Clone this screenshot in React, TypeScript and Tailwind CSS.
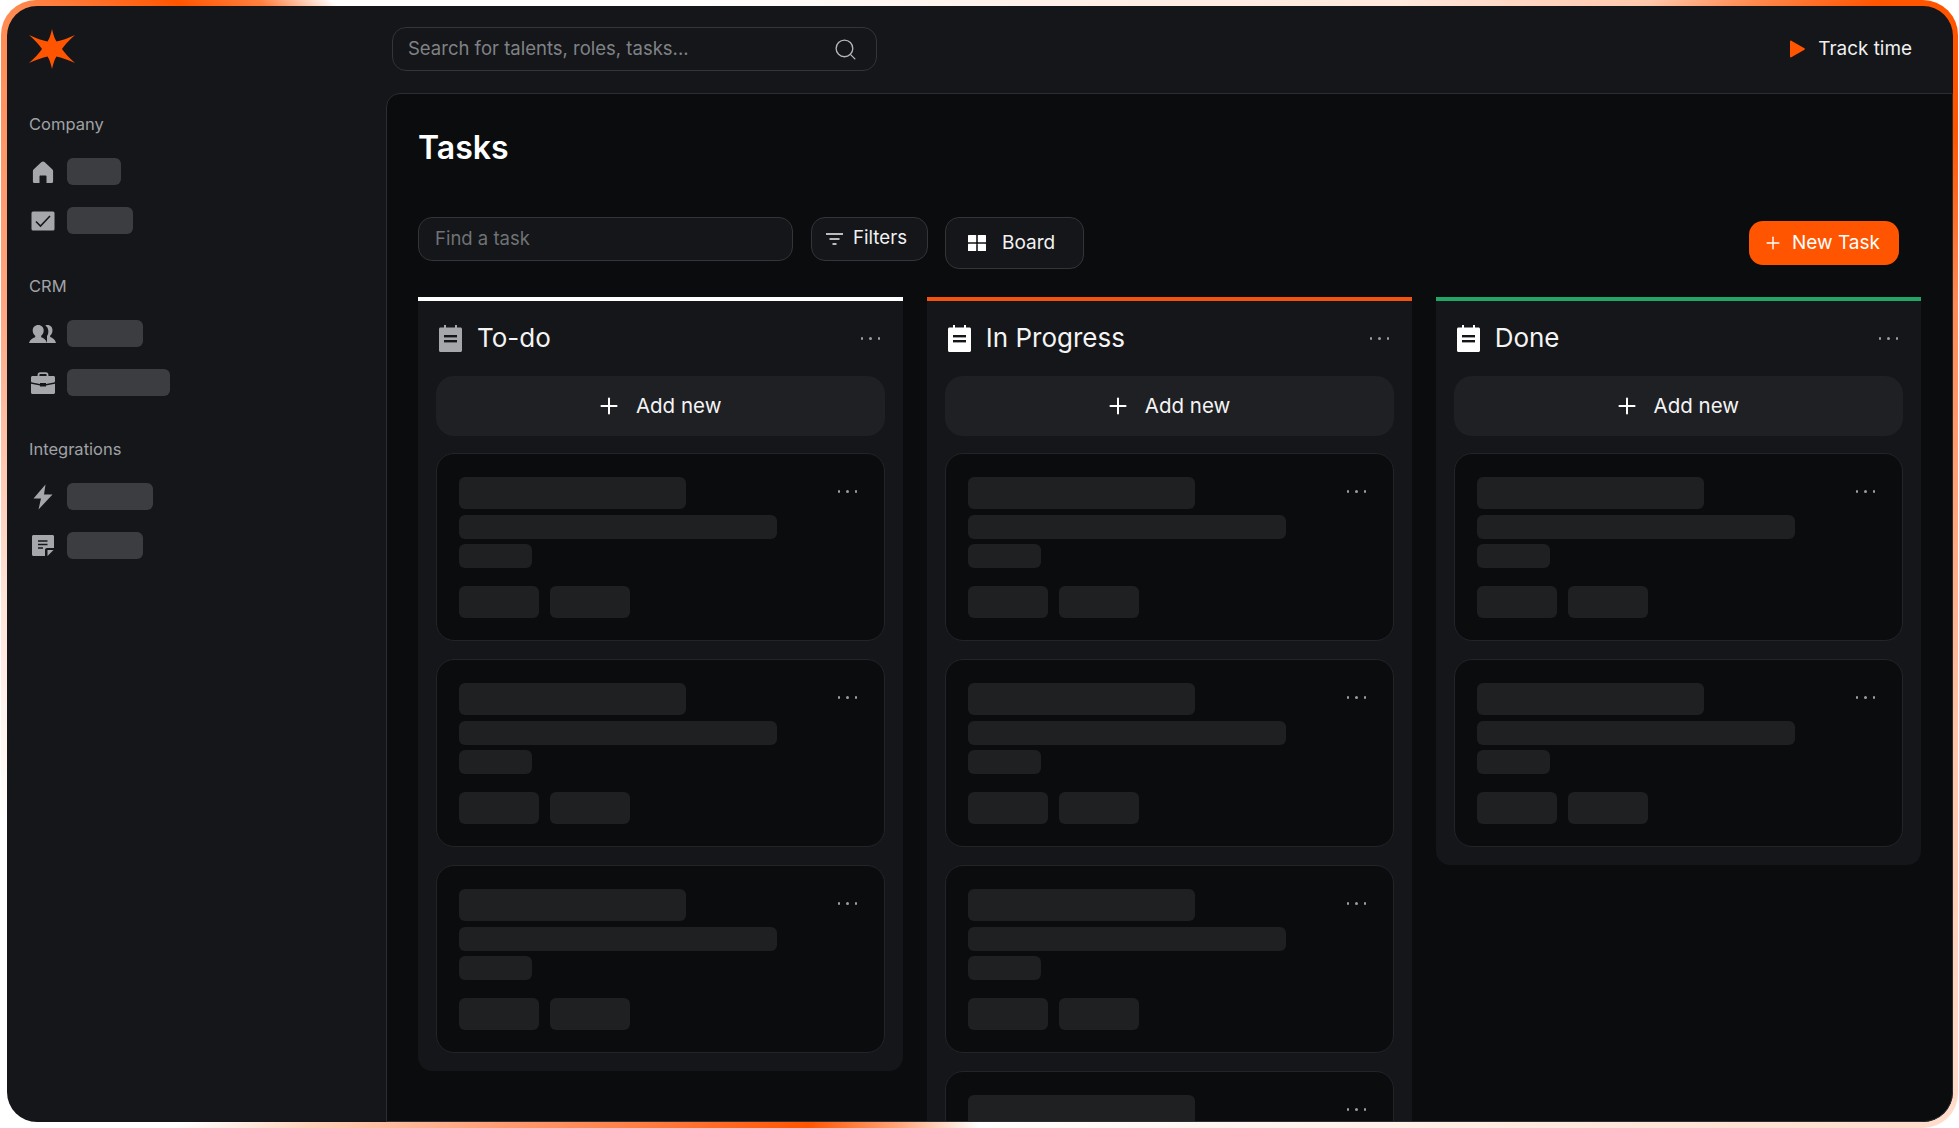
import { Plus, Search } from "lucide-react";

const NAV = [
  {
    label: "Company",
    top: "mt-[43px]",
    items: [
      { icon: HomeIcon, width: "w-[54px]" },
      { icon: CheckIcon, width: "w-[66px]" },
    ],
  },
  {
    label: "CRM",
    top: "mt-[40px]",
    items: [
      { icon: UsersIcon, width: "w-[76px]" },
      { icon: CaseIcon, width: "w-[103px]" },
    ],
  },
  {
    label: "Integrations",
    top: "mt-[41px]",
    items: [
      { icon: BoltIcon, width: "w-[86px]" },
      { icon: NoteIcon, width: "w-[76px]" },
    ],
  },
];

const COLUMNS = [
  { title: "To-do", bar: "bg-white", icon: "text-[#a6a7aa]", cards: 3 },
  { title: "In Progress", bar: "bg-[#f2540f]", icon: "text-white", cards: 4 },
  { title: "Done", bar: "bg-[#22a565]", icon: "text-white", cards: 2 },
];

function HomeIcon() {
  return (
    <svg width="24" height="26" viewBox="0 0 24 26" className="text-[#a6a7aa]">
      <path fill="currentColor" d="M12 2.500c.6 0 1.100.2 1.500.6l8 7.400c.4.400.6.900.6 1.400v10.600c0 .8-.6 1.500-1.400 1.500H15.500v-6.500c0-.6-.4-1-1-1h-5c-.6 0-1 .4-1 1V24H3.300c-.8 0-1.400-.7-1.400-1.500V11.900c0-.5.200-1 .6-1.400l8-7.400c.4-.4.900-.6 1.500-.6z" />
    </svg>
  );
}

function CheckIcon() {
  return (
    <svg width="24" height="20" viewBox="0 0 24 20">
      <rect x="0.500" y="0.500" width="23" height="19" rx="1.500" fill="#a6a7aa" />
      <path d="M5 10.500l4.500 4.500 9.500-10" fill="none" stroke="#17181b" strokeWidth="1.600" />
    </svg>
  );
}

function UsersIcon() {
  return (
    <svg width="27" height="18" viewBox="0 0 27 18" className="text-[#a6a7aa]">
      <path fill="currentColor" d="M18.500 0c3 0 5 2.300 5 5.200 0 2.300-1 4.300-2.300 5.400v1.500c2.400.8 4.900 2.400 5.800 5.900H18v-7c1-1.300 1.500-3.200 1.300-5.300-.2-2.400-1.300-4.300-3-5.300.7-.3 1.400-.4 2.200-.4z" />
      <path fill="currentColor" d="M9.200 0c3.200 0 5.500 2.400 5.500 5.400 0 2.300-1 4.200-2.500 5.300v1.500c2.600.8 4.900 2.500 5.800 5.800H0c.9-3.300 3.500-5 6.200-5.800v-1.500C4.700 9.600 3.700 7.700 3.700 5.400 3.700 2.400 6 0 9.200 0z" />
    </svg>
  );
}

function CaseIcon() {
  return (
    <svg width="24" height="22" viewBox="0 0 24 22" className="text-[#a6a7aa]">
      <path fill="none" stroke="currentColor" strokeWidth="1.800" d="M7.500 5V2.800c0-.9.700-1.600 1.600-1.600h5.800c.9 0 1.600.7 1.600 1.600V5" />
      <path fill="currentColor" d="M1.500 4h21c.8 0 1.500.7 1.500 1.500V9c0 .8-.5 1.400-1.200 1.600L15 12v-1H9v1L1.200 10.600C.5 10.400 0 9.800 0 9V5.500C0 4.700.7 4 1.500 4z" />
      <path fill="currentColor" d="M0 11.800l9 1.700v1h6v-1l9-1.700v8.700c0 .8-.7 1.500-1.500 1.500h-21C.7 22 0 21.300 0 20.500z" />
    </svg>
  );
}

function BoltIcon() {
  return (
    <svg width="20" height="26" viewBox="0 0 20 26" className="text-[#a6a7aa]">
      <path fill="currentColor" d="M12.500 0.500L0.500 14.500h7.500L5.500 25.500 19.500 10.500h-8.500z" />
    </svg>
  );
}

function NoteIcon() {
  return (
    <svg width="22" height="21" viewBox="0 0 22 21">
      <path fill="#a6a7aa" d="M1.500 0h19c.8 0 1.500.6 1.500 1.400V13h-7c-1.100 0-2 .9-2 2v6H1.500C.7 21 0 20.300 0 19.500V1.500C0 .7.700 0 1.500 0z" />
      <path fill="#a6a7aa" d="M15.500 15H21.500L15.500 21z" />
      <path fill="none" stroke="#17181b" strokeWidth="1.700" d="M6 6h9.500M6 9.500h9.500M6 13h5" />
    </svg>
  );
}

function Logo() {
  return (
    <svg width="46" height="40" viewBox="0 0 46 40" className="text-[#ff5500]">
      <path fill="currentColor" d="M23 0Q25 9 27.500 12.500Q35 11 46 6Q37 14 33 20Q37 26 46 34Q35 29 27.500 27.500Q25 31 23 40Q21 31 18.500 27.500Q11 29 0 34Q9 26 13 20Q9 14 0 6Q11 11 18.500 12.500Q21 9 23 0z" />
    </svg>
  );
}

function FilterIcon() {
  return (
    <svg width="17" height="12" viewBox="0 0 17 12">
      <path d="M0 1h17M3.500 6h10M6.500 11h4" stroke="#f2f2f2" strokeWidth="1.500" fill="none" />
    </svg>
  );
}

function BoardIcon() {
  return (
    <svg width="18" height="16" viewBox="0 0 18 16" fill="#ffffff">
      <rect width="8.200" height="7.300" rx="0.500" />
      <rect x="9.800" width="8.200" height="7.300" rx="0.500" />
      <rect y="8.700" width="8.200" height="7.300" rx="0.500" />
      <rect x="9.800" y="8.700" width="8.200" height="7.300" rx="0.500" />
    </svg>
  );
}

function ListIcon({ className }: { className: string }) {
  return (
    <svg width="23" height="27" viewBox="0 0 23 27" className={className}>
      <path fill="currentColor" d="M5 0h2v2.500h9V0h2v2.500h3.500c.8 0 1.500.7 1.500 1.500v21.500c0 .8-.7 1.500-1.500 1.500h-20C.7 27 0 26.300 0 25.500V4c0-.8.700-1.500 1.500-1.500H5z" />
      <rect x="5" y="10" width="13" height="2.400" fill="#141619" />
      <rect x="5" y="15" width="13" height="2.400" fill="#141619" />
    </svg>
  );
}

function Dots({ className }: { className?: string }) {
  return (
    <div className={`flex gap-[6px] ${className ?? ""}`}>
      <span className="h-[2.500px] w-[2.500px] rounded-full bg-[#9c9da0]" />
      <span className="h-[2.500px] w-[2.500px] rounded-full bg-[#9c9da0]" />
      <span className="h-[2.500px] w-[2.500px] rounded-full bg-[#9c9da0]" />
    </div>
  );
}

function Sidebar() {
  return (
    <aside className="flex w-[379px] shrink-0 flex-col pl-[22px] pt-[23px]">
      <Logo />
      {NAV.map((group) => (
        <div key={group.label} className={group.top}>
          <div className="h-[26px] text-[16.500px] leading-[24px] text-[#a0a2a6]">{group.label}</div>
          <div className="mt-[20px] flex flex-col gap-[22px]">
            {group.items.map((item, j) => {
              const Icon = item.icon;
              return (
                <div key={j} className="flex h-[27px] items-center">
                  <div className="flex w-[38px] justify-center pr-[11px]">
                    <Icon />
                  </div>
                  <div className={`-ml-[0.500px] h-[27px] rounded-[6px] bg-[#3c3d41] ${item.width}`} />
                </div>
              );
            })}
          </div>
        </div>
      ))}
    </aside>
  );
}

function TaskCard() {
  return (
    <div className="relative h-[188px] shrink-0 rounded-[18px] border border-[#222427] bg-[#0b0c0e] px-[22px] pt-[23px]">
      <div className="h-[32px] w-[227px] rounded-[6px] bg-[#1f2022]" />
      <div className="mt-[6px] h-[24px] w-[318px] rounded-[6px] bg-[#1f2022]" />
      <div className="mt-[5px] h-[24px] w-[73px] rounded-[6px] bg-[#1f2022]" />
      <div className="mt-[18px] flex gap-[11px]">
        <div className="h-[32px] w-[80px] rounded-[6px] bg-[#1f2022]" />
        <div className="h-[32px] w-[80px] rounded-[6px] bg-[#1f2022]" />
      </div>
      <Dots className="absolute right-[27px] top-[36px]" />
    </div>
  );
}

function Column({ title, bar, icon, cards }: (typeof COLUMNS)[number]) {
  return (
    <div className="flex flex-col rounded-b-[14px] bg-[#141619] pb-[18px]">
      <div className={`h-[4px] shrink-0 ${bar}`} />
      <div className="flex h-[75px] shrink-0 items-center px-[21px]">
        <ListIcon className={icon} />
        <span className="ml-[15px] pb-[2px] text-[26px] leading-[32px] text-[#f4f4f4]">{title}</span>
        <Dots className="ml-auto mr-[2px]" />
      </div>
      <div className="flex flex-col gap-[18px] px-[18px]">
        <button className="-mb-px flex h-[60px] shrink-0 items-center justify-center gap-[14px] rounded-[18px] bg-[#1e2024] pr-[4px] text-[20.500px] text-[#f4f4f4]">
          <Plus size={26} strokeWidth={1.850} className="text-white" />
          <span>Add new</span>
        </button>
        {Array.from({ length: cards }).map((_, i) => (
          <TaskCard key={i} />
        ))}
      </div>
    </div>
  );
}

export default function App() {
  return (
    <div className="h-[1128px] overflow-hidden bg-white px-[1px]">
      <div className="h-full rounded-[35px] bg-[conic-gradient(from_0deg_at_50%_50%,#fff3ec_0deg,#ffe8dd_37deg,#ffc8ac_50deg,#ff8a50_54deg,#ff5500_58deg,#ff5500_66deg,#ff8a55_75deg,#ffc4a8_100deg,#ffdccc_120deg,#fff0e8_143deg,#ffffff_180deg,#ffa880_188deg,#ff5500_197deg,#ff6a25_205deg,#ff9a70_220deg,#ffd0ba_230deg,#ffffff_235deg,#ffffff_255deg,#ffe4d8_268deg,#ffa680_285deg,#ff8a50_300deg,#ff5500_305deg,#ff8040_308deg,#ffffff_311deg,#ffffff_330deg,#fff3ec_360deg)] pb-[6px] pl-[6px] pr-[5px] pt-[6px] font-[Inter,sans-serif]">
        <div className="flex h-full overflow-hidden rounded-[30px] bg-[#141619]">
          <Sidebar />
          <div className="flex min-w-0 flex-1 flex-col">
            <header className="flex h-[87px] shrink-0 items-center pr-[41px]">
              <div className="-mt-[1px] ml-[6px] flex h-[44px] w-[485px] items-center justify-between rounded-[14px] border border-[#333538] pl-[15px] pr-[18px] text-[18.500px] text-[#808286]">
                <span>Search for talents, roles, tasks...</span>
                <Search size={25} strokeWidth={1.300} className="text-[#b4b5b8]" />
              </div>
              <div className="ml-auto flex items-center gap-[13px] text-[18.900px] text-[#f0f0f0]">
                <svg width="15" height="18" viewBox="0 0 16 18" className="text-[#ff5500]">
                  <path fill="currentColor" d="M0 1v16c0 .8.800 1.200 1.400.8l14-7.900c.6-.4.600-1.400 0-1.800L1.400.2C.8-.2 0 .2 0 1z" />
                </svg>
                <span>Track time</span>
              </div>
            </header>
            <main className="min-h-0 flex-1 overflow-hidden rounded-br-[30px] rounded-tl-[14px] border border-[#2c2d30] bg-[#0b0c0e] pl-[31px] pr-[31px] pt-[34px]">
              <h1 className="text-[32px] font-semibold leading-[40px] text-white">Tasks</h1>
              <div className="mt-[49px] flex items-start">
                <div className="flex h-[44px] w-[375px] items-center rounded-[14px] border border-[#333538] bg-[#141619] pb-[1px] pl-[16px] text-[18.500px] text-[#707276]">
                  Find a task
                </div>
                <button className="ml-[18px] flex h-[44px] w-[117px] items-center gap-[10px] rounded-[14px] border border-[#333538] bg-[#141619] pb-[1px] pl-[14px] text-[18.700px] text-[#f2f2f2]">
                  <FilterIcon />
                  <span>Filters</span>
                </button>
                <button className="ml-[17px] flex h-[52px] w-[139px] items-center gap-[16px] rounded-[14px] border border-[#333538] bg-[#141619] pl-[22px] text-[19px] text-[#f2f2f2]">
                  <BoardIcon />
                  <span>Board</span>
                </button>
                <button className="ml-auto mr-[22px] flex h-[44px] w-[150px] items-center gap-[9px] self-center rounded-[14px] bg-[#ff5500] pl-[14px] text-[19px] text-white">
                  <Plus size={20} strokeWidth={1.700} />
                  <span>New Task</span>
                </button>
              </div>
              <div className="mt-[28px] grid grid-cols-3 items-start gap-[23.500px]">
                {COLUMNS.map((col) => (
                  <Column key={col.title} {...col} />
                ))}
              </div>
            </main>
          </div>
        </div>
      </div>
    </div>
  );
}
